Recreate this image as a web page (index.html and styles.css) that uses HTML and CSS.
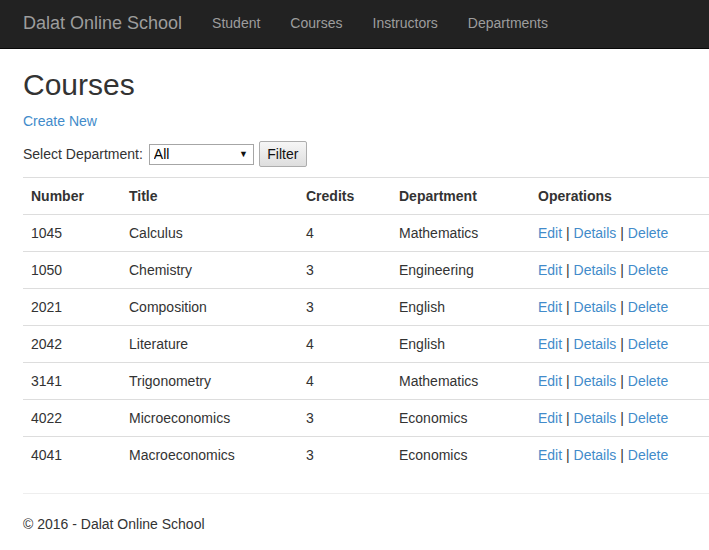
FILE: index.html
```html
<!DOCTYPE html>
<html>
<head>
<meta charset="utf-8">
<title>Courses - Dalat Online School</title>
<link rel="stylesheet" href="styles.css">
</head>
<body>
<nav class="navbar">
  <a class="brand" href="#">Dalat Online School</a>
  <ul class="nav">
    <li><a href="#">Student</a></li>
    <li><a href="#">Courses</a></li>
    <li><a href="#">Instructors</a></li>
    <li><a href="#">Departments</a></li>
  </ul>
</nav>
<main class="body-content">
  <h2 class="title">Courses</h2>
  <p class="para"><a class="link" href="#">Create New</a></p>
  <form class="filter">
    <label class="filter-label">Select Department:</label>
    <span class="select-wrap">
      <select class="select"><option>All</option></select>
      <span class="select-arrow">&#9660;</span>
    </span>
    <button type="button" class="btn">Filter</button>
  </form>
  <table class="table">
    <thead>
      <tr><th class="c1">Number</th><th class="c2">Title</th><th class="c3">Credits</th><th class="c4">Department</th><th class="c5">Operations</th></tr>
    </thead>
    <tbody>
      <tr><td>1045</td><td>Calculus</td><td>4</td><td>Mathematics</td><td><a class="link" href="#">Edit</a> | <a class="link" href="#">Details</a> | <a class="link" href="#">Delete</a></td></tr>
      <tr><td>1050</td><td>Chemistry</td><td>3</td><td>Engineering</td><td><a class="link" href="#">Edit</a> | <a class="link" href="#">Details</a> | <a class="link" href="#">Delete</a></td></tr>
      <tr><td>2021</td><td>Composition</td><td>3</td><td>English</td><td><a class="link" href="#">Edit</a> | <a class="link" href="#">Details</a> | <a class="link" href="#">Delete</a></td></tr>
      <tr><td>2042</td><td>Literature</td><td>4</td><td>English</td><td><a class="link" href="#">Edit</a> | <a class="link" href="#">Details</a> | <a class="link" href="#">Delete</a></td></tr>
      <tr><td>3141</td><td>Trigonometry</td><td>4</td><td>Mathematics</td><td><a class="link" href="#">Edit</a> | <a class="link" href="#">Details</a> | <a class="link" href="#">Delete</a></td></tr>
      <tr><td>4022</td><td>Microeconomics</td><td>3</td><td>Economics</td><td><a class="link" href="#">Edit</a> | <a class="link" href="#">Details</a> | <a class="link" href="#">Delete</a></td></tr>
      <tr><td>4041</td><td>Macroeconomics</td><td>3</td><td>Economics</td><td><a class="link" href="#">Edit</a> | <a class="link" href="#">Details</a> | <a class="link" href="#">Delete</a></td></tr>
    </tbody>
  </table>
  <hr class="rule">
  <footer class="footer">
    <p class="para">&copy; 2016 - Dalat Online School</p>
  </footer>
</main>
</body>
</html>
```
FILE: styles.css
```css
html, body {
  margin: 0;
  padding: 0;
  overflow: hidden;
}
body {
  font-family: "Liberation Sans", Arial, Helvetica, sans-serif;
  font-size: 14px;
  line-height: 20px;
  color: #333;
  background: #fff;
}
.navbar {
  height: 47px;
  background: #222;
  border-bottom: 1px solid #080808;
  display: flex;
  align-items: center;
  padding-left: 8px;
  padding-bottom: 1px;
  box-sizing: content-box;
}
.brand {
  font-size: 18px;
  line-height: 20px;
  padding: 0 15px 1px;
  color: #9d9d9d;
  text-decoration: none;
}
.nav {
  display: flex;
  list-style: none;
  margin: 0;
  padding: 0;
}
.nav a {
  display: block;
  padding: 0 15px 1px;
  color: #9d9d9d;
  text-decoration: none;
  font-size: 14px;
  line-height: 20px;
}
.body-content {
  padding-left: 23px;
}
.title {
  font-size: 30px;
  font-weight: 500;
  line-height: 33px;
  margin: 19px 0 10px;
}
.para {
  margin: 0 0 10px;
}
.link {
  color: #428bca;
  text-decoration: none;
}
.filter {
  display: flex;
  align-items: center;
  height: 26px;
  margin: 0 0 10px;
}
.filter-label {
  margin-right: 6px;
}
.select-wrap {
  position: relative;
  display: inline-block;
  margin-right: 5px;
}
.select {
  -webkit-appearance: none;
  appearance: none;
  width: 105px;
  height: 21px;
  box-sizing: border-box;
  border: 1px solid #a6a6a6;
  border-radius: 0;
  background: #fff;
  font-family: "Liberation Sans", Arial, sans-serif;
  font-size: 14px;
  color: #000;
  padding: 0 0 0 4px;
  margin: 0;
  display: block;
}
.select-arrow {
  position: absolute;
  right: 6px;
  top: 4px;
  font-size: 9px;
  line-height: 12px;
  color: #111;
  pointer-events: none;
}
.btn {
  height: 26px;
  width: 48px;
  box-sizing: border-box;
  border: 1px solid #adadad;
  border-radius: 2px;
  background: linear-gradient(#f6f6f6, #dedede);
  font-family: "Liberation Sans", Arial, sans-serif;
  font-size: 14px;
  color: #111;
  padding: 0 6px;
}
.table {
  width: 700px;
  border-collapse: collapse;
  border-spacing: 0;
  margin-bottom: 20px;
}
.table th, .table td {
  padding: 8px;
  line-height: 20px;
  text-align: left;
  vertical-align: top;
  border-top: 1px solid #ddd;
}
.table th {
  font-weight: bold;
  vertical-align: bottom;
  border-bottom: 1px solid #ddd;
}
.table tbody tr:first-child td {
  border-top: 0;
}
.c1 { width: 82px; }
.c2 { width: 161px; }
.c3 { width: 77px; }
.c4 { width: 123px; }
.rule {
  margin: 0 0 20px;
  border: 0;
  border-top: 1px solid #eee;
  width: 700px;
}
.footer .para {
  margin: 0;
}
```
